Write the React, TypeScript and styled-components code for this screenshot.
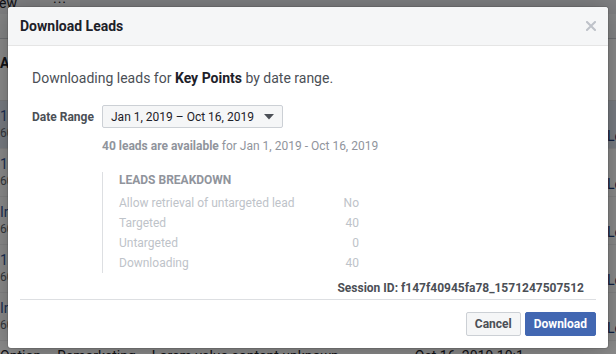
import React from 'react';
import styled, { createGlobalStyle } from 'styled-components';

const GlobalStyle = createGlobalStyle`
  html, body {
    margin: 0;
    padding: 0;
    width: 616px;
    height: 354px;
    overflow: hidden;
    font-family: Roboto, 'Liberation Sans', Arial, sans-serif;
  }
`;

const rows = [
  { title: '1', sub: '6', side: 'Le', active: true },
  { title: '1', sub: '6', side: 'Le' },
  { title: 'In', sub: '6', side: 'Le' },
  { title: '1', sub: '6', side: 'Le' },
  { title: 'In', sub: '6', side: 'Le' }
];

const breakdown = [
  { label: 'Allow retrieval of untargeted lead', value: 'No' },
  { label: 'Targeted', value: '40' },
  { label: 'Untargeted', value: '0' },
  { label: 'Downloading', value: '40' }
];

const CloseIcon = () => (
  <svg width="10" height="10" viewBox="0 0 10 10">
    <path d="M1 1 L9 9 M9 1 L1 9" stroke="#bec2c9" strokeWidth="2" strokeLinecap="square" />
  </svg>
);

const Caret = () => (
  <svg width="10" height="6" viewBox="0 0 10 6">
    <path d="M0 0 H10 L5 5.5 Z" fill="#4b4f56" />
  </svg>
);

const App = () => {
  return (
    <Page>
      <GlobalStyle />
      <Backdrop>
        <TopBar>
          <Tab>Preview</Tab>
          <Tab light>···</Tab>
        </TopBar>
        <Toolbar />
        <ListHeader>Ad</ListHeader>
        {rows.map((row, i) => (
          <Row key={i} active={row.active}>
            <Cell>
              <RowTitle>{row.title}23 Lead form</RowTitle>
              <RowSub>{row.sub}01 leads</RowSub>
            </Cell>
            <SideCell>{row.side}ads</SideCell>
          </Row>
        ))}
        <LastRow>
          <span>Option</span>
          <span>Remarketing</span>
          <span>Lorem value content unknown</span>
          <span>Oct 16, 2019 10:1</span>
        </LastRow>
      </Backdrop>
      <Overlay />

      <Modal>
        <Header>
          <Title>Download Leads</Title>
          <CloseButton>
            <CloseIcon />
          </CloseButton>
        </Header>
        <Body>
          <Intro>
            Downloading leads for <b>Key Points</b> by date range.
          </Intro>
          <DateRow>
            <DateLabel>Date Range</DateLabel>
            <Dropdown>
              <span>Jan 1, 2019 – Oct 16, 2019</span>
              <Caret />
            </Dropdown>
          </DateRow>
          <Available>
            <b>40 leads are available</b> for Jan 1, 2019 - Oct 16, 2019
          </Available>
          <Breakdown>
            <BreakdownTitle>LEADS BREAKDOWN</BreakdownTitle>
            <BreakdownGrid>
              {breakdown.map((item) => (
                <React.Fragment key={item.label}>
                  <span>{item.label}</span>
                  <Value>{item.value}</Value>
                </React.Fragment>
              ))}
            </BreakdownGrid>
          </Breakdown>
          <Session>Session ID: f147f40945fa78_1571247507512</Session>
        </Body>
        <Divider />
        <Footer>
          <Button>Cancel</Button>
          <Button primary>Download</Button>
        </Footer>
      </Modal>
    </Page>
  );
};

const Page = styled.div`
  position: relative;
  width: 616px;
  height: 354px;
  overflow: hidden;
  background: #fff;
`;

const Backdrop = styled.div`
  display: flex;
  flex-direction: column;
  width: 700px;
`;

const TopBar = styled.div`
  display: flex;
  height: 14px;
  background: #e9ebee;
  overflow: hidden;
`;

const Tab = styled.div<{ light?: boolean }>`
  width: ${(p) => (p.light ? '40px' : '72px')};
  margin-left: ${(p) => (p.light ? '0' : '-32px')};
  padding-left: ${(p) => (p.light ? '13px' : '0')};
  box-sizing: border-box;
  overflow: hidden;
  white-space: nowrap;
  background: ${(p) => (p.light ? '#f5f6f7' : '#e9ebee')};
  color: #1d2129;
  font-size: 14px;
  line-height: 6px;
  letter-spacing: ${(p) => (p.light ? '1px' : '0')};
`;

const Toolbar = styled.div`
  height: 24px;
  background: #f5f6f7;
  border-bottom: 1px solid #ccd0d5;
`;

const ListHeader = styled.div`
  height: 62px;
  padding-top: 16px;
  box-sizing: border-box;
  font-size: 14px;
  font-weight: bold;
  color: #1d2129;
  border-bottom: 1px solid #dddfe2;
`;

const Row = styled.div<{ active?: boolean }>`
  display: grid;
  grid-template-columns: 607px 1fr;
  height: 48px;
  box-sizing: border-box;
  background: ${(p) => (p.active ? '#dfe6f1' : '#fff')};
  border-bottom: 1px solid #eeeff1;
`;

const Cell = styled.div`
  display: flex;
  flex-direction: column;
  padding-top: 6px;
`;

const RowTitle = styled.div`
  color: #365899;
  font-size: 14px;
  line-height: 18px;
`;

const RowSub = styled.div`
  color: #616770;
  font-size: 12px;
  line-height: 16px;
`;

const SideCell = styled.div`
  padding-top: 27px;
  color: #1c3c7a;
  font-size: 14px;
  line-height: 16px;
`;

const LastRow = styled.div`
  display: flex;
  gap: 16px;
  padding-top: 6px;
  color: #1d2129;
  font-size: 14px;
  line-height: 18px;

  span:last-child {
    margin-left: 60px;
  }
`;

const Overlay = styled.div`
  position: absolute;
  inset: 0;
  background: rgba(0, 0, 0, 0.45);
`;

const Modal = styled.div`
  position: absolute;
  top: 7px;
  left: 8px;
  width: 600px;
  background: #fff;
  border-radius: 3px;
  box-shadow: 0 2px 26px rgba(0, 0, 0, 0.3), 0 0 0 1px rgba(0, 0, 0, 0.1);
  overflow: hidden;
`;

const Header = styled.div`
  display: flex;
  align-items: center;
  justify-content: space-between;
  height: 39px;
  box-sizing: border-box;
  padding: 0 12px;
  background: #f5f6f7;
  border-bottom: 1px solid #e5e5e5;
`;

const Title = styled.div`
  font-size: 14px;
  font-weight: bold;
  color: #1d2129;
`;

const CloseButton = styled.div`
  display: flex;
  width: 10px;
  height: 10px;
`;

const Body = styled.div`
  display: flex;
  flex-direction: column;
  padding: 23px 24px 3px;
  color: #4b4f56;
`;

const Intro = styled.div`
  font-size: 14px;
  line-height: 18px;
  color: #4b4f56;

  b {
    color: #1d2129;
  }
`;

const DateRow = styled.div`
  display: flex;
  align-items: center;
  margin-top: 18px;
`;

const DateLabel = styled.div`
  width: 70px;
  font-size: 12px;
  font-weight: bold;
  white-space: nowrap;
  color: #4b4f56;
`;

const Dropdown = styled.div`
  display: flex;
  align-items: center;
  gap: 10px;
  height: 23px;
  box-sizing: border-box;
  padding: 0 8px;
  background: #f5f6f7;
  border: 1px solid #ccd0d5;
  border-radius: 2px;
  font-size: 12px;
  color: #1d2129;
`;

const Available = styled.div`
  margin: 10px 0 0 70px;
  font-size: 12px;
  line-height: 16px;
  color: #90949c;
`;

const Breakdown = styled.div`
  display: flex;
  flex-direction: column;
  margin: 18px 0 0 70px;
  padding-left: 16px;
  border-left: 1px solid #dddfe2;
  width: 240px;
`;

const BreakdownTitle = styled.div`
  font-size: 12px;
  line-height: 16px;
  font-weight: bold;
  color: #90949c;
`;

const BreakdownGrid = styled.div`
  display: grid;
  grid-template-columns: 1fr auto;
  grid-auto-rows: 20px;
  align-items: center;
  margin-top: 5px;
  font-size: 12px;
  color: #bec3c9;
`;

const Value = styled.span`
  text-align: right;
`;

const Session = styled.div`
  align-self: flex-end;
  margin-top: 7px;
  font-size: 12px;
  line-height: 16px;
  font-weight: bold;
  color: #4b4f56;
`;

const Divider = styled.div`
  height: 1px;
  margin: 0 12px;
  background: #dddfe2;
`;

const Footer = styled.div`
  display: flex;
  justify-content: flex-end;
  gap: 4px;
  padding: 12px;
`;

const Button = styled.button<{ primary?: boolean }>`
  height: 24px;
  padding: 0 8px;
  border-radius: 2px;
  border: 1px solid ${(p) => (p.primary ? '#4267b2' : '#ccd0d5')};
  background: ${(p) => (p.primary ? '#4267b2' : '#f5f6f7')};
  color: ${(p) => (p.primary ? '#fff' : '#4b4f56')};
  font-family: inherit;
  font-size: 12px;
  font-weight: bold;
`;

export default App;
